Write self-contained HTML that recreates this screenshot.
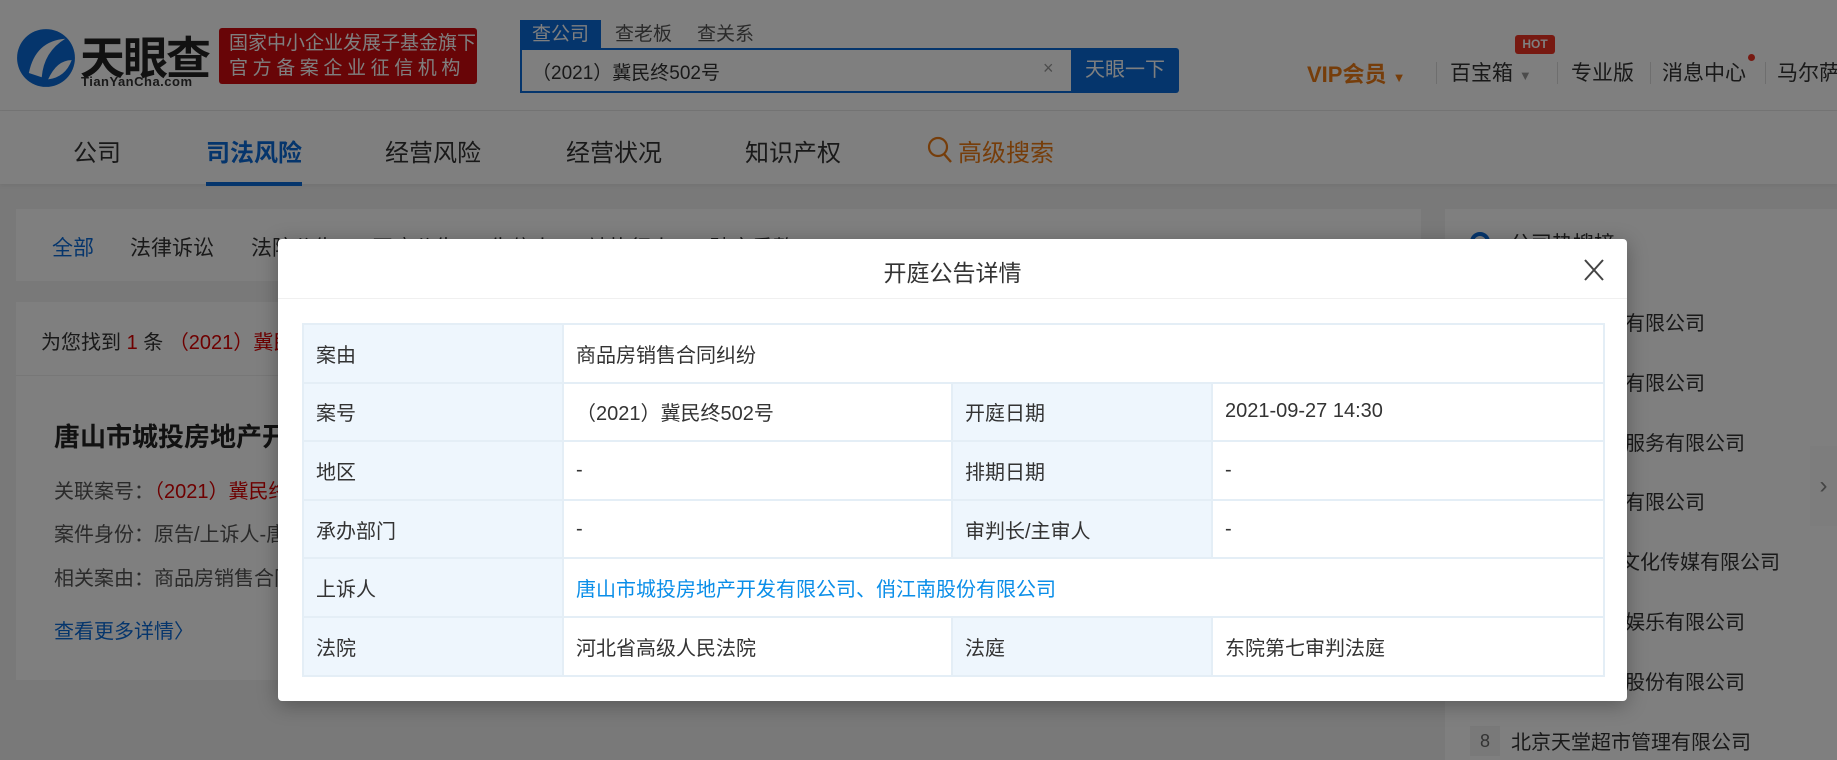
<!DOCTYPE html>
<html><head><meta charset="utf-8"><style>
*{margin:0;padding:0;box-sizing:border-box}
html,body{width:1837px;height:760px;overflow:hidden}
body{position:relative;background:#f2f2f2;font-family:"Liberation Sans","Noto Sans CJK SC",sans-serif;color:#333}
.a{position:absolute;white-space:nowrap}
.hdr{left:0;top:0;width:1837px;height:111px;background:#fff;border-bottom:1px solid #e8e8e8}
.nav{left:0;top:111px;width:1837px;height:73px;background:#fff;box-shadow:0 2px 4px rgba(0,0,0,.05)}
.nav span{position:absolute;top:22px;font-size:24px;color:#333}
.card{background:#fff}
.ov{left:0;top:0;width:1837px;height:760px;background:rgba(0,0,0,.5)}
.modal{left:278px;top:239px;width:1349px;height:462px;background:#fff;border-radius:4px;box-shadow:0 4px 20px rgba(0,0,0,.3)}
table{position:absolute;left:24px;top:84px;border-collapse:collapse;font-size:20px}
td{height:58.6px;border:2px solid #e4eef6;padding:0 12px;color:#333}
td.l{background:#eef6fd}
.rl{font-size:20px;color:#333}
</style></head><body>
<div class="a hdr"></div>
<svg class="a" style="left:16px;top:28px" width="60" height="60" viewBox="0 0 56 56"><circle cx="28" cy="28" r="27" fill="#0a6ad8"/><path d="M12 42 Q18 12 46 10 Q26 22 24 46Z" fill="#fff"/><path d="M30 48 Q38 30 52 30 Q46 46 30 48Z" fill="#fff"/></svg>
<div class="a" style="left:80px;top:22px;font-size:45px;font-weight:bold;color:#222;letter-spacing:-2px">天眼查</div>
<div class="a" style="left:81px;top:74px;font-size:13px;color:#333;font-weight:bold;letter-spacing:.5px">TianYanCha.com</div>
<div class="a" style="left:219px;top:28px;width:258px;height:56px;background:#d10a0f;border-radius:3px;color:#fff;font-size:19px;line-height:25px;padding:3px 10px">国家中小企业发展子基金旗下<br><span style="letter-spacing:4.6px">官方备案企业征信机构</span></div>
<div class="a" style="left:520px;top:20px;width:81px;height:29px;background:#0a6ad8;color:#fff;font-size:19px;text-align:center;line-height:29px">查公司</div>
<div class="a" style="left:615px;top:20px;font-size:19px;color:#555;line-height:29px">查老板</div>
<div class="a" style="left:697px;top:20px;font-size:19px;color:#555;line-height:29px">查关系</div>
<div class="a" style="left:520px;top:48px;width:552px;height:45px;border:2px solid #0a6ad8;border-right:none"></div>
<div class="a" style="left:532px;top:58px;font-size:19px;color:#333">（2021）冀民终502号</div>
<div class="a" style="left:1043px;top:58px;font-size:18px;color:#999">×</div>
<div class="a" style="left:1071px;top:48px;width:108px;height:45px;background:#0a6ad8;color:#fff;font-size:20px;text-align:center;line-height:45px;border-radius:0 3px 3px 0">天眼一下</div>
<div class="a" style="left:1307px;top:57px;font-size:22px;font-weight:bold;color:#ec7b14">VIP会员 <span style="font-size:13px">▼</span></div>
<div class="a" style="left:1450px;top:57px;font-size:21px;color:#333">百宝箱 <span style="font-size:13px;color:#999">▼</span></div>
<div class="a" style="left:1515px;top:35px;width:40px;height:19px;background:#e32;color:#fff;font-size:12px;font-weight:bold;text-align:center;line-height:19px;border-radius:3px">HOT</div>
<div class="a" style="left:1571px;top:57px;font-size:21px;color:#333">专业版</div>
<div class="a" style="left:1662px;top:57px;font-size:21px;color:#333">消息中心</div>
<div class="a" style="left:1748px;top:54px;width:7px;height:7px;border-radius:50%;background:#e32"></div>
<div class="a" style="left:1777px;top:57px;font-size:21px;color:#333">马尔萨</div>
<div class="a" style="left:1436px;top:62px;width:1px;height:22px;background:#ddd"></div>
<div class="a" style="left:1557px;top:62px;width:1px;height:22px;background:#ddd"></div>
<div class="a" style="left:1650px;top:62px;width:1px;height:22px;background:#ddd"></div>
<div class="a" style="left:1765px;top:62px;width:1px;height:22px;background:#ddd"></div>
<div class="a nav"><span style="left:73px">公司</span><span style="left:206px;color:#0a6ad8;font-weight:bold">司法风险</span><span style="left:385px">经营风险</span><span style="left:566px">经营状况</span><span style="left:745px">知识产权</span><span style="left:958px;color:#ec7b14">高级搜索</span>
<svg class="a" style="left:927px;top:25px" width="26" height="28" viewBox="0 0 26 28"><circle cx="11" cy="11" r="9" fill="none" stroke="#ec7b14" stroke-width="2.2"/><path d="M17 18L24 26" stroke="#ec7b14" stroke-width="2.4"/></svg>
<div class="a" style="left:206px;top:71px;width:96px;height:4px;background:#0a6ad8"></div></div>
<div class="a card" style="left:16px;top:209px;width:1405px;height:72px"></div>
<div class="a" style="left:52px;top:232px;font-size:21px;color:#0a6ad8">全部</div>
<div class="a" style="left:130px;top:232px;font-size:21px">法律诉讼</div>
<div class="a" style="left:251px;top:232px;font-size:21px">法院公告</div>
<div class="a" style="left:372px;top:232px;font-size:21px">开庭公告</div>
<div class="a" style="left:490px;top:232px;font-size:21px">失信人</div>
<div class="a" style="left:588px;top:232px;font-size:21px">被执行人</div>
<div class="a" style="left:710px;top:232px;font-size:21px">破产重整</div>
<div class="a card" style="left:16px;top:302px;width:1405px;height:378px"></div>
<div class="a" style="left:16px;top:375px;width:1405px;height:1px;background:#eee"></div>
<div class="a" style="left:41px;top:326px;font-size:20px">为您找到 <span style="color:#d00">1</span> 条 <span style="color:#d00">（2021）冀民终502号</span></div>
<div class="a" style="left:54px;top:417px;font-size:26px;font-weight:bold;color:#222">唐山市城投房地产开发有限公司</div>
<div class="a" style="left:54px;top:475px;font-size:20px;color:#555">关联案号：<span style="color:#d00">（2021）冀民终502号</span></div>
<div class="a" style="left:54px;top:518px;font-size:20px;color:#555">案件身份：原告/上诉人-唐山市城投房地产开发有限公司</div>
<div class="a" style="left:54px;top:562px;font-size:20px;color:#555">相关案由：商品房销售合同纠纷</div>
<div class="a" style="left:54px;top:615px;font-size:20px;color:#0a6ad8">查看更多详情〉</div>
<div class="a card" style="left:1445px;top:209px;width:392px;height:551px"></div>
<div class="a" style="left:1470px;top:232px;width:20px;height:20px;border:4px solid #0a6ad8;border-radius:50%"></div>
<div class="a" style="left:1510px;top:228px;font-size:21px">公司热搜榜</div>
<div class="a rl" style="left:1505px;top:307px">腾讯控股集团有限公司</div>
<div class="a rl" style="left:1505px;top:367px">深圳华为实业有限公司</div>
<div class="a rl" style="left:1505px;top:427px">京东世纪物流服务有限公司</div>
<div class="a rl" style="left:1505px;top:486px">浙江网易娱乐有限公司</div>
<div class="a rl" style="left:1500px;top:546px">北京华谊兄日文化传媒有限公司</div>
<div class="a rl" style="left:1505px;top:606px">上海米哈游影娱乐有限公司</div>
<div class="a rl" style="left:1505px;top:666px">阿里巴巴集团股份有限公司</div>
<div class="a" style="left:1470px;top:726px;width:30px;height:30px;background:#f2f2f2;text-align:center;line-height:30px;font-size:18px;color:#666">8</div>
<div class="a rl" style="left:1511px;top:726px">北京天堂超市管理有限公司</div>
<div class="a" style="left:1810px;top:446px;width:27px;height:80px;background:#fafafa;color:#888;font-size:24px;line-height:80px;text-align:center">›</div>
<div class="a ov"></div>
<div class="a modal">
<div class="a" style="left:0;top:15px;width:1349px;text-align:center;font-size:23px;color:#333">开庭公告详情</div>
<svg class="a" style="left:1306px;top:20px" width="20" height="22" viewBox="0 0 20 22"><path d="M1 1L19 21M19 1L1 21" stroke="#444" stroke-width="2"/></svg>
<div class="a" style="left:0;top:59px;width:1349px;height:1px;background:#f0f0f0"></div>
<table>
<tr><td class="l" style="width:260px">案由</td><td colspan="3">商品房销售合同纠纷</td></tr>
<tr><td class="l">案号</td><td style="width:389px">（2021）冀民终502号</td><td class="l" style="width:260px">开庭日期</td><td style="width:392px">2021-09-27 14:30</td></tr>
<tr><td class="l">地区</td><td>-</td><td class="l">排期日期</td><td>-</td></tr>
<tr><td class="l">承办部门</td><td>-</td><td class="l">审判长/主审人</td><td>-</td></tr>
<tr><td class="l">上诉人</td><td colspan="3" style="color:#0a8ee8">唐山市城投房地产开发有限公司、俏江南股份有限公司</td></tr>
<tr><td class="l">法院</td><td>河北省高级人民法院</td><td class="l">法庭</td><td>东院第七审判法庭</td></tr>
</table>
</div>
</body></html>
